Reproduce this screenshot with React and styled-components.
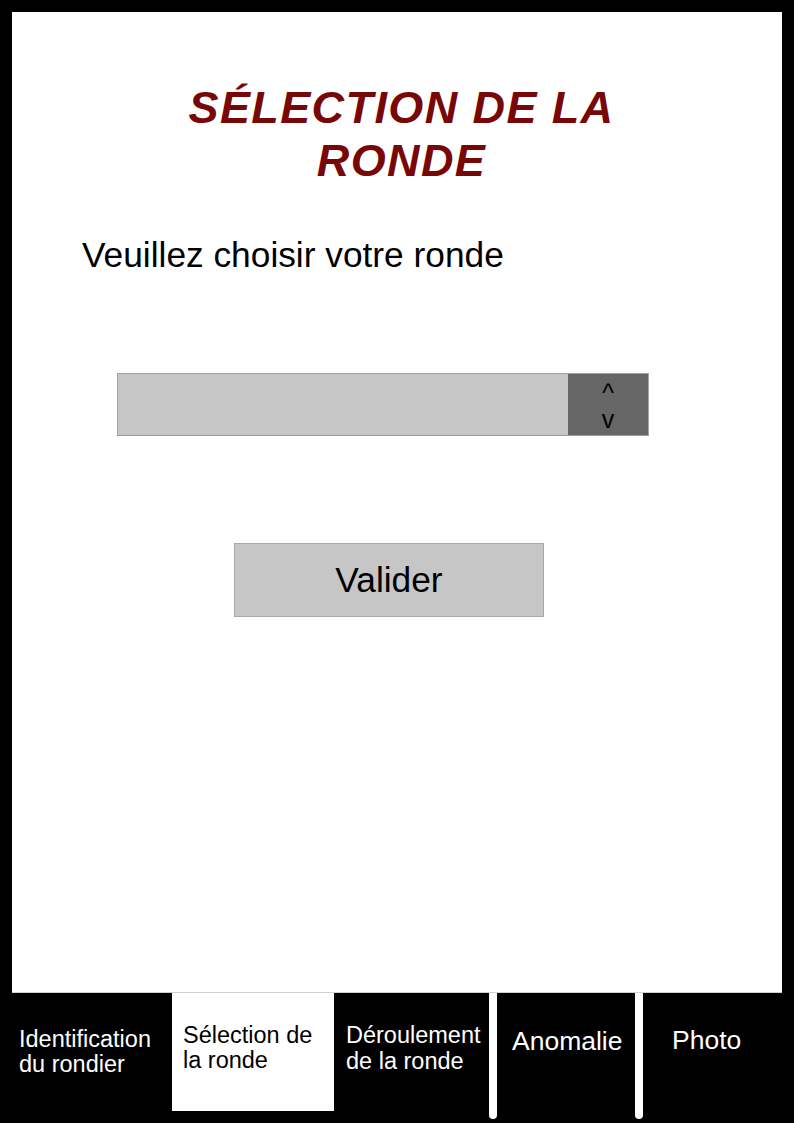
import React from "react";
import styled, { createGlobalStyle } from "styled-components";

const Global = createGlobalStyle`
  html, body { margin: 0; padding: 0; background: #000; }
  body { font-family: "Liberation Sans", Arial, sans-serif; }
  * { box-sizing: border-box; }
`;

const Screen = styled.div`
  width: 794px;
  height: 1123px;
  background: #000;
  display: flex;
  flex-direction: column;
  overflow: hidden;
`;

const Panel = styled.main`
  margin: 12px 12px 0 12px;
  height: 981px;
  background: #fff;
  border-bottom: 1px solid #d0d0d0;
  display: flex;
  flex-direction: column;
  padding-top: 70px;
`;

const Title = styled.h1`
  margin: 0 auto;
  width: 500px;
  text-align: center;
  font-family: "Liberation Sans", Arial, sans-serif;
  font-style: italic;
  font-weight: bold;
  font-size: 45px;
  letter-spacing: 1.4px;
  line-height: 52.7px;
  color: #780808;
  padding-left: 9px;
`;

const Prompt = styled.p`
  margin: 48px 0 0 70px;
  font-size: 35.3px;
  line-height: 39px;
  color: #000;
`;

const SelectBox = styled.div`
  margin: 99px 0 0 105px;
  width: 532px;
  height: 63px;
  display: flex;
  border: 1px solid #a3a3a3;
  border-bottom-color: #9a9a9a;
  background: #c6c6c6;
`;

const SelectField = styled.div`
  flex: 1;
  background: #c6c6c6;
`;

const Spinner = styled.div`
  width: 80px;
  background: #666;
  display: flex;
  flex-direction: column;
  align-items: center;
  justify-content: center;
  padding-top: 3px;
  font-size: 25px;
  line-height: 26px;
  color: #000;
`;

const Arrow = styled.span`
  display: block;
`;

const ValidateButton = styled.button`
  margin: 107px 0 0 222px;
  width: 310px;
  height: 74px;
  background: #c6c6c6;
  border: 1px solid #a8a8a8;
  font-family: "Liberation Sans", Arial, sans-serif;
  font-size: 35.3px;
  color: #000;
  padding: 0;
  cursor: pointer;
`;

const TabBar = styled.nav`
  display: flex;
  height: 130px;
  align-items: flex-start;
`;

const Tab = styled.div`
  width: ${(p) => p.$w}px;
  height: ${(p) => (p.$active ? 118 : 130)}px;
  background: ${(p) => (p.$active ? "#fff" : "#000")};
  color: ${(p) => (p.$active ? "#000" : "#fff")};
  padding-top: ${(p) => p.$top}px;
  padding-left: ${(p) => p.$left}px;
  font-size: ${(p) => p.$size}px;
  line-height: ${(p) => p.$lh}px;
  white-space: nowrap;
`;

const Divider = styled.div`
  width: 8px;
  height: 126px;
  background: #fff;
  border-radius: 0 0 4px 4px;
`;

export default function App() {
  return (
    <Screen>
      <Global />
      <Panel>
        <Title>SÉLECTION DE LA RONDE</Title>
        <Prompt>Veuillez choisir votre ronde</Prompt>
        <SelectBox>
          <SelectField />
          <Spinner>
            <Arrow>^</Arrow>
            <Arrow>v</Arrow>
          </Spinner>
        </SelectBox>
        <ValidateButton>Valider</ValidateButton>
      </Panel>
      <TabBar>
        <Tab $w={172} $top={34} $left={19} $size={23.5} $lh={25.3}>
          Identification
          <br />
          du rondier
        </Tab>
        <Tab $w={162} $active $top={30} $left={11} $size={23.5} $lh={25}>
          Sélection de
          <br />
          la ronde
        </Tab>
        <Tab $w={155} $top={29} $left={12} $size={23.5} $lh={26}>
          Déroulement
          <br />
          de la ronde
        </Tab>
        <Divider />
        <Tab $w={138} $top={33} $left={15} $size={26.5} $lh={30}>
          Anomalie
        </Tab>
        <Divider />
        <Tab $w={151} $top={32} $left={29} $size={26.5} $lh={30}>
          Photo
        </Tab>
      </TabBar>
    </Screen>
  );
}
